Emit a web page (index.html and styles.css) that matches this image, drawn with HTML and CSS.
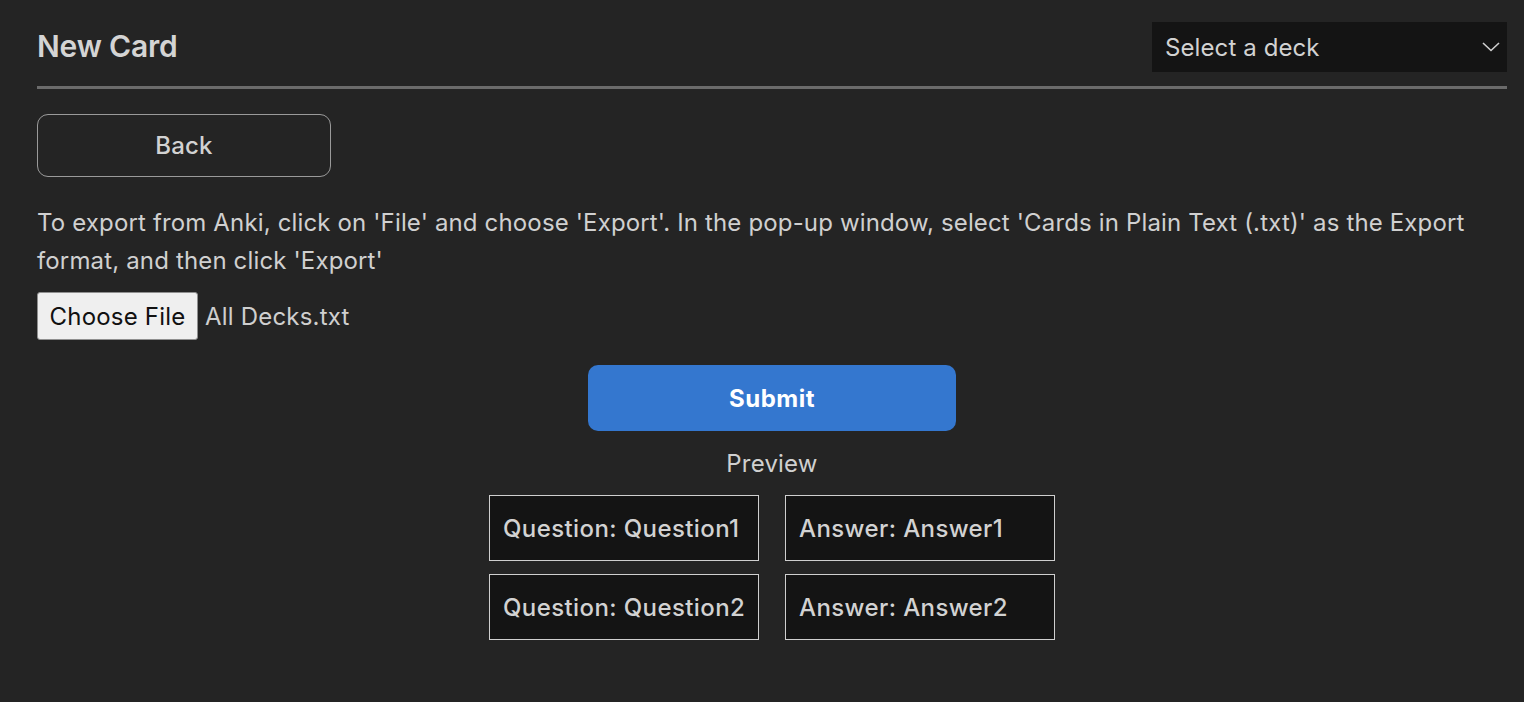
FILE: index.html
```html
<!DOCTYPE html>
<html>
<head>
<meta charset="utf-8">
<link rel="stylesheet" href="styles.css">
</head>
<body>
<div class="page">
  <header class="header">
    <h1 class="title">New Card</h1>
    <div class="select">
      <span>Select a deck</span>
      <svg class="chev" width="18" height="10" viewBox="0 0 18 10"><path d="M1 1 L9 8.5 L17 1" fill="none" stroke="#d0d0d0" stroke-width="1.6"/></svg>
    </div>
  </header>
  <div class="rule"></div>
  <button class="back">Back</button>
  <p class="info">To export from Anki, click on 'File' and choose 'Export'. In the pop-up window, select 'Cards in Plain Text (.txt)' as the Export format, and then click 'Export'</p>
  <div class="file">
    <span class="file-btn">Choose File</span>
    <span class="file-name">All Decks.txt</span>
  </div>
  <div class="center">
    <button class="submit">Submit</button>
    <div class="preview-label">Preview</div>
    <div class="grid">
      <div class="cell">Question: Question1</div>
      <div class="cell">Answer: Answer1</div>
      <div class="cell">Question: Question2</div>
      <div class="cell">Answer: Answer2</div>
    </div>
  </div>
</div>
</body>
</html>
```
FILE: styles.css
```css
html, body {
  margin: 0;
  background: #242424;
}
body {
  font-family: Inter, "Noto Sans", sans-serif;
  color: #d2d2d2;
  font-size: 24px;
}
.page {
  padding: 22px 17px 0 37px;
}
.header {
  display: flex;
  justify-content: space-between;
  align-items: center;
  height: 50px;
}
.title {
  margin: 0;
  font-size: 30px;
  font-weight: 600;
  color: #d4d4d4;
  letter-spacing: -0.2px;
  position: relative;
  top: -1px;
}
.select {
  width: 355px;
  height: 50px;
  box-sizing: border-box;
  background: #141414;
  display: flex;
  align-items: center;
  justify-content: space-between;
  padding: 0 7px 0 13px;
  font-size: 24px;
  color: #d2d2d2;
  letter-spacing: 0.1px;
}
.chev {
  display: block;
}
.rule {
  margin-top: 14px;
  height: 3px;
  background: #6b6b6b;
}
.back {
  display: block;
  margin-top: 25px;
  width: 294px;
  height: 63px;
  border: 1px solid #9a9a9a;
  border-radius: 11px;
  background: transparent;
  color: #d2d2d2;
  font-family: inherit;
  font-size: 24px;
  font-weight: 500;
  letter-spacing: 0.2px;
}
.info {
  margin: 27px 0 0;
  line-height: 38px;
  font-size: 24px;
  letter-spacing: 0.15px;
  color: #d0d0d0;
}
.file {
  margin-top: 12px;
  display: flex;
  align-items: center;
  gap: 7px;
}
.file-btn {
  box-sizing: border-box;
  height: 48px;
  width: 161px;
  display: flex;
  align-items: center;
  justify-content: center;
  background: #efefef;
  border: 1px solid #8f8f8f;
  border-radius: 3px;
  color: #111;
  font-size: 24px;
  letter-spacing: 0.2px;
}
.file-name {
  font-size: 24px;
  letter-spacing: 0.2px;
  color: #cfcfcf;
}
.center {
  display: flex;
  flex-direction: column;
  align-items: center;
}
.submit {
  margin-top: 25px;
  width: 368px;
  height: 66px;
  border: none;
  border-radius: 10px;
  background: #3477cf;
  color: #fff;
  font-family: inherit;
  font-size: 24px;
  font-weight: 700;
  letter-spacing: 0.5px;
}
.preview-label {
  margin-top: 14px;
  line-height: 38px;
  font-size: 24px;
  letter-spacing: 0.2px;
  color: #d0d0d0;
}
.grid {
  margin-top: 12px;
  display: grid;
  grid-template-columns: 270px 270px;
  column-gap: 26px;
  row-gap: 13px;
}
.cell {
  box-sizing: border-box;
  height: 66px;
  background: #141414;
  border: 1px solid #cfcfcf;
  display: flex;
  align-items: center;
  padding-left: 13px;
  font-size: 24px;
  font-weight: 500;
  letter-spacing: 0.4px;
  color: #d2d2d2;
  white-space: nowrap;
}
```
